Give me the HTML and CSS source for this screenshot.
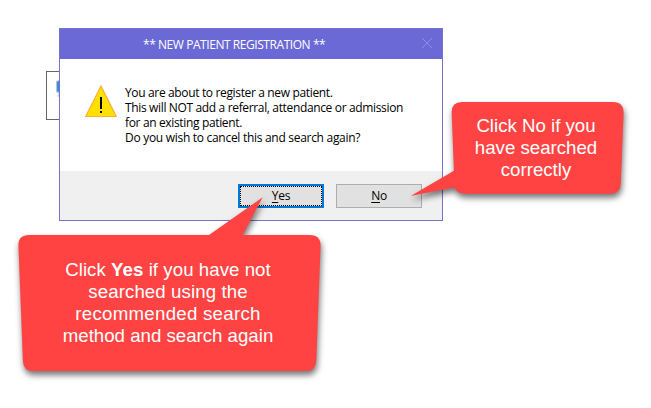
FILE: index.html
```html
<!DOCTYPE html>
<html lang="en">
<head>
    <meta charset="UTF-8">
    <meta name="viewport" content="width=device-width, initial-scale=1.0">
    <title>New Patient Registration</title>
    <link rel="stylesheet" href="styles.css">
</head>
<body>
    <!-- window partly hidden behind the dialog -->
    <div class="back-window">
        <svg width="4" height="19" viewBox="0 0 4 19">
            <path d="M1 1L4 0V14L1 12Z" fill="#b9c6d2"/>
            <path d="M2 2L4 1V12L2 11Z" fill="#2f8fe0"/>
            <path d="M2 16L4 14V17Z" fill="#c4c9ce"/>
        </svg>
    </div>

    <div class="dialog">
        <div class="title-bar">
            <span class="title">** NEW PATIENT REGISTRATION **</span>
            <svg class="close" width="10" height="10" viewBox="0 0 10 10">
                <path d="M0 0L10 10M10 0L0 10" stroke="#918fe4" stroke-width="1"/>
            </svg>
        </div>
        <div class="dialog-body">
            <svg class="warning" width="32" height="32" viewBox="0 0 32 32">
                <path d="M16 1L31.3 31.5H0.7Z" fill="#ffe000" stroke="#fbb034" stroke-width="1.2"/>
                <path d="M15 12H17V24H15ZM15 26H17V28H15Z" fill="#000"/>
            </svg>
            <div class="message">
                <p>You are about to register a new patient.</p>
                <p>This will NOT add a referral, attendance or admission</p>
                <p>for an existing patient.</p>
                <p class="question">Do you wish to cancel this and search again?</p>
            </div>
        </div>
        <div class="dialog-footer">
            <button class="btn btn-default"><span><u>Y</u>es</span></button>
            <button class="btn"><span><u>N</u>o</span></button>
        </div>
    </div>

    <!-- callouts -->
    <div class="callout callout-yes">
        <svg class="bubble" width="303" height="175" viewBox="18 197 303 175">
            <path d="M29 235H209L262.7 197.3L242.7 235H310Q320.8 235 320.6 246L316.3 361Q315.8 371 306 371H33Q23.3 371 22.9 361L18.4 246Q18 235 29 235Z" fill="#ff4343"/>
        </svg>
        <p class="first">Click <b>Yes</b> if you have not</p>
        <p class="second">searched using the</p>
        <p class="third">recommended search</p>
        <p>method and search again</p>
    </div>
    <div class="callout callout-no">
        <svg class="bubble" width="214" height="96" viewBox="410 102 214 96">
            <path d="M462 102H613Q623.8 102 623.6 113L620.8 183.5Q620.4 193.7 610.5 193.7H465Q456.5 193.7 454.8 187.3L410.7 196L453.9 170.7L451.7 113Q451.3 102 462 102Z" fill="#ff4343"/>
        </svg>
        <p>Click No if you<br>have searched<br>correctly</p>
    </div>
</body>
</html>
```
FILE: styles.css
```css
body {
    margin: 0;
    height: 408px;
    position: relative;
    overflow: hidden;
    background-color: #fff;
    font-family: "Open Sans", sans-serif;
    font-size: 12px;
}

p {
    margin: 0;
    white-space: nowrap;
}

.back-window {
    position: absolute;
    left: 46px;
    top: 71px;
    width: 30px;
    height: 47px;
    border: 1px solid #666;
}

.back-window svg {
    display: block;
    margin: 8px 0 0 8px;
}

/* dialog */
.dialog {
    position: absolute;
    left: 59px;
    top: 28px;
    width: 382px;
    height: 191px;
    border: 1px solid #7673d0;
    background-color: #fff;
    display: flex;
    flex-direction: column;
}

.title-bar {
    height: 30px;
    background-color: #6b69d6;
    color: #fff;
    display: flex;
    align-items: center;
    justify-content: space-between;
    padding: 0 10px 0 83px;
}

.title {
    letter-spacing: -0.44px;
}

.close {
    margin-top: -2px;
}

.dialog-body {
    height: 112px;
    display: flex;
}

.warning {
    margin: 26px 0 0 25px;
}

.message {
    margin: 26px 0 0 8px;
    line-height: 15px;
    letter-spacing: -0.35px;
}

.message .question {
    letter-spacing: -0.29px;
}

.dialog-footer {
    flex: 1;
    background-color: #f0f0f0;
    display: flex;
    justify-content: flex-end;
    gap: 12px;
    padding: 13px 20px 0 0;
}

.btn {
    box-sizing: border-box;
    width: 86px;
    height: 24px;
    padding: 0;
    border: 1px solid #adadad;
    background-color: #e1e1e1;
    color: #000;
    font-family: inherit;
    font-size: 12px;
    line-height: 16px;
    letter-spacing: -0.3px;
}

.btn-default {
    border: 2px solid #0078d7;
    outline: 1px dotted #000;
    outline-offset: -3px;
}

.btn u {
    text-underline-offset: 2px;
}

/* callouts */
.callout {
    position: absolute;
    color: #fff;
    font-family: "Liberation Sans", Arial, sans-serif;
    font-size: 18.67px;
    line-height: 22px;
    text-align: center;
}

.bubble {
    position: absolute;
    left: 0;
    top: 0;
    overflow: visible;
    filter: drop-shadow(1px 4px 3px rgba(0, 0, 0, 0.55));
}

.callout p {
    position: relative;
}

.callout-yes {
    box-sizing: border-box;
    left: 18px;
    top: 197px;
    width: 303px;
    height: 175px;
    padding: 62px 3px 0 0;
}

.callout-yes .first {
    letter-spacing: 0.05px;
}

.callout-yes .second {
    letter-spacing: 0.1px;
}

.callout-yes .third {
    letter-spacing: 0.27px;
}

.callout-no {
    left: 410px;
    top: 102px;
    width: 214px;
    height: 96px;
}

.callout-no p {
    padding: 13px 0 0 38px;
}
```
